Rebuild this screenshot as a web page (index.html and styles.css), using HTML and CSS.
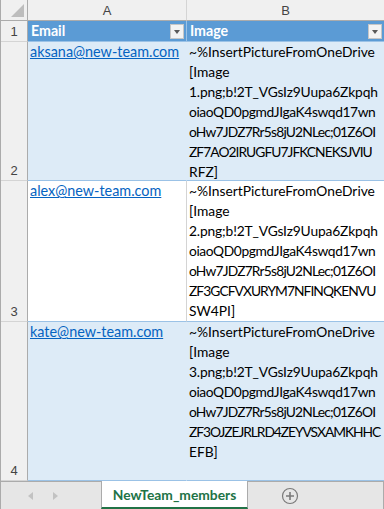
FILE: index.html
```html
<!DOCTYPE html>
<html lang="en">
<head>
    <meta charset="UTF-8">
    <title>NewTeam_members</title>
    <link rel="stylesheet" href="styles.css">
</head>
<body>

<div class="sheet">
    <!-- column headers -->
    <div class="corner"><span class="corner-tri"></span></div>
    <div class="col-head">A</div>
    <div class="col-head last">B</div>

    <!-- row 1: table header -->
    <div class="row-head r1">1</div>
    <div class="th">Email <span class="filter"></span></div>
    <div class="th last">Image <span class="filter"></span></div>

    <!-- row 2 -->
    <div class="row-head r2">2</div>
    <div class="td band"><a class="mail">aksana@new-team.com</a></div>
    <div class="td band last">
        <span class="line">~%InsertPictureFromOneDrive</span>
        <span class="line">[Image</span>
        <span class="line t1">1.png;b!2T_VGsIz9Uupa6Zkpqh</span>
        <span class="line t2">oiaoQD0pgmdJIgaK4swqd17wn</span>
        <span class="line t3">oHw7JDZ7Rr5s8jU2NLec;01Z6OI</span>
        <span class="line t4">ZF7AO2IRUGFU7JFKCNEKSJVIU</span>
        <span class="line">RFZ]</span>
    </div>

    <!-- row 3 -->
    <div class="row-head r3">3</div>
    <div class="td"><a class="mail">alex@new-team.com</a></div>
    <div class="td last">
        <span class="line">~%InsertPictureFromOneDrive</span>
        <span class="line">[Image</span>
        <span class="line t1">2.png;b!2T_VGsIz9Uupa6Zkpqh</span>
        <span class="line t2">oiaoQD0pgmdJIgaK4swqd17wn</span>
        <span class="line t3">oHw7JDZ7Rr5s8jU2NLec;01Z6OI</span>
        <span class="line t4">ZF3GCFVXURYM7NFINQKENVU</span>
        <span class="line">SW4PI]</span>
    </div>

    <!-- row 4 -->
    <div class="row-head r4">4</div>
    <div class="td band"><a class="mail">kate@new-team.com</a></div>
    <div class="td band last">
        <span class="line">~%InsertPictureFromOneDrive</span>
        <span class="line">[Image</span>
        <span class="line t1">3.png;b!2T_VGsIz9Uupa6Zkpqh</span>
        <span class="line t2">oiaoQD0pgmdJIgaK4swqd17wn</span>
        <span class="line t3">oHw7JDZ7Rr5s8jU2NLec;01Z6OI</span>
        <span class="line t5">ZF3OJZEJRLRD4ZEYVSXAMKHHC</span>
        <span class="line">EFB]</span>
    </div>
</div>

<div class="tabs">
    <div class="nav">
        <span class="arrow left"></span>
        <span class="arrow right"></span>
    </div>
    <div class="tab">NewTeam_members</div>
    <div class="add">
        <svg width="18" height="18" viewBox="0 0 18 18">
            <circle cx="9" cy="9" r="7.5" fill="none" stroke="#7a7a7a" stroke-width="1.2"/>
            <path d="M9 5v8M5 9h8" stroke="#7a7a7a" stroke-width="1.6"/>
        </svg>
    </div>
</div>

</body>
</html>
```

FILE: styles.css
```css
body {
    margin: 0;
    width: 384px;
    height: 509px;
    overflow: hidden;
    font-family: Lato, "Liberation Sans", sans-serif;
    font-size: 13.8px;
    color: #000;
    background: #fff;
}

.sheet {
    display: grid;
    grid-template-columns: 27px 159px 198px;
    grid-template-rows: 21px 21px 139px 141px 159px;
    box-sizing: border-box;
    border-left: 1px solid #ababab;
}

/* Encabezados de columna */
.corner, .col-head, .row-head {
    background: #f0f0f0;
    color: #444;
    border-right: 1px solid #d4d4d4;
    border-bottom: 1px solid #d4d4d4;
    box-sizing: border-box;
}

.corner {
    position: relative;
    border-bottom-color: #ababab;
    border-right-color: #ababab;
}

.corner-tri {
    position: absolute;
    right: 3px;
    bottom: 3px;
    width: 0;
    height: 0;
    border-left: 13px solid transparent;
    border-bottom: 13px solid #bdbdbd;
}

.col-head {
    display: flex;
    align-items: center;
    justify-content: center;
    font-family: "Liberation Sans", sans-serif;
    font-size: 13px;
    border-bottom-color: #ababab;
}

.row-head {
    display: flex;
    align-items: flex-end;
    justify-content: center;
    font-family: "Liberation Sans", sans-serif;
    font-size: 13px;
    line-height: 19px;
    border-right-color: #ababab;
}

.last {
    border-right: 1px solid #ababab;
}

/* Cabecera de la tabla */
.th {
    background: #5b9bd5;
    color: #fff;
    font-weight: bold;
    font-size: 14.2px;
    display: flex;
    align-items: center;
    justify-content: space-between;
    padding: 0 2px 0 3px;
    box-sizing: border-box;
    border-right: 1px solid #9bc2e6;
    border-bottom: 1px solid #9bc2e6;
    line-height: 20px;
}

.th.last {
    border-right-color: #ababab;
}

.filter {
    position: relative;
    width: 14px;
    height: 15px;
    background: #f3f3f3;
    border: 1px solid #c6c6c6;
    box-sizing: border-box;
}

.filter::after {
    content: '';
    position: absolute;
    left: 3px;
    top: 5px;
    border-left: 3.5px solid transparent;
    border-right: 3.5px solid transparent;
    border-top: 4px solid #595959;
}

/* Celdas */
.td {
    background: #fff;
    padding: 0 2px;
    box-sizing: border-box;
    line-height: 20px;
    border-right: 1px solid #d4d4d4;
    border-bottom: 1px solid #9bc2e6;
    overflow: hidden;
}

.td.band {
    background: #ddebf7;
    border-right-color: #ddebf7;
}

.td.last {
    border-right-color: #ababab;
}

.mail {
    color: #0563c1;
    font-size: 14.4px;
    text-decoration: underline;
    white-space: nowrap;
}

.line {
    display: block;
    white-space: nowrap;
}

/* Lineas con muchas mayusculas y digitos: mas apretadas */
.t1 { letter-spacing: -0.15px; }
.t2 { letter-spacing: -0.4px; }
.t3 { letter-spacing: -0.8px; }
.t4 { letter-spacing: -0.95px; }
.t5 { letter-spacing: -1.05px; }

/* Barra de hojas */
.tabs {
    display: flex;
    align-items: stretch;
    height: 28px;
    background: #e6e6e6;
    border-top: 1px solid #ababab;
    border-left: 1px solid #ababab;
    border-right: 1px solid #ababab;
    box-sizing: border-box;
}

.nav {
    width: 100px;
    display: flex;
    align-items: center;
    gap: 20px;
    padding-left: 27px;
    box-sizing: border-box;
}

.arrow {
    width: 0;
    height: 0;
    border-top: 4px solid transparent;
    border-bottom: 4px solid transparent;
}

.arrow.left {
    border-right: 5px solid #c2c2c2;
}

.arrow.right {
    border-left: 5px solid #c2c2c2;
}

.tab {
    width: 147px;
    margin-top: -1px;
    background: #fff;
    border-left: 1px solid #ababab;
    border-right: 1px solid #ababab;
    border-bottom: 2px solid #217346;
    box-sizing: border-box;
    color: #217346;
    font-weight: bold;
    display: flex;
    align-items: center;
    justify-content: center;
    padding-top: 1px;
}

.add {
    display: flex;
    align-items: center;
    padding-left: 33px;
}
```
